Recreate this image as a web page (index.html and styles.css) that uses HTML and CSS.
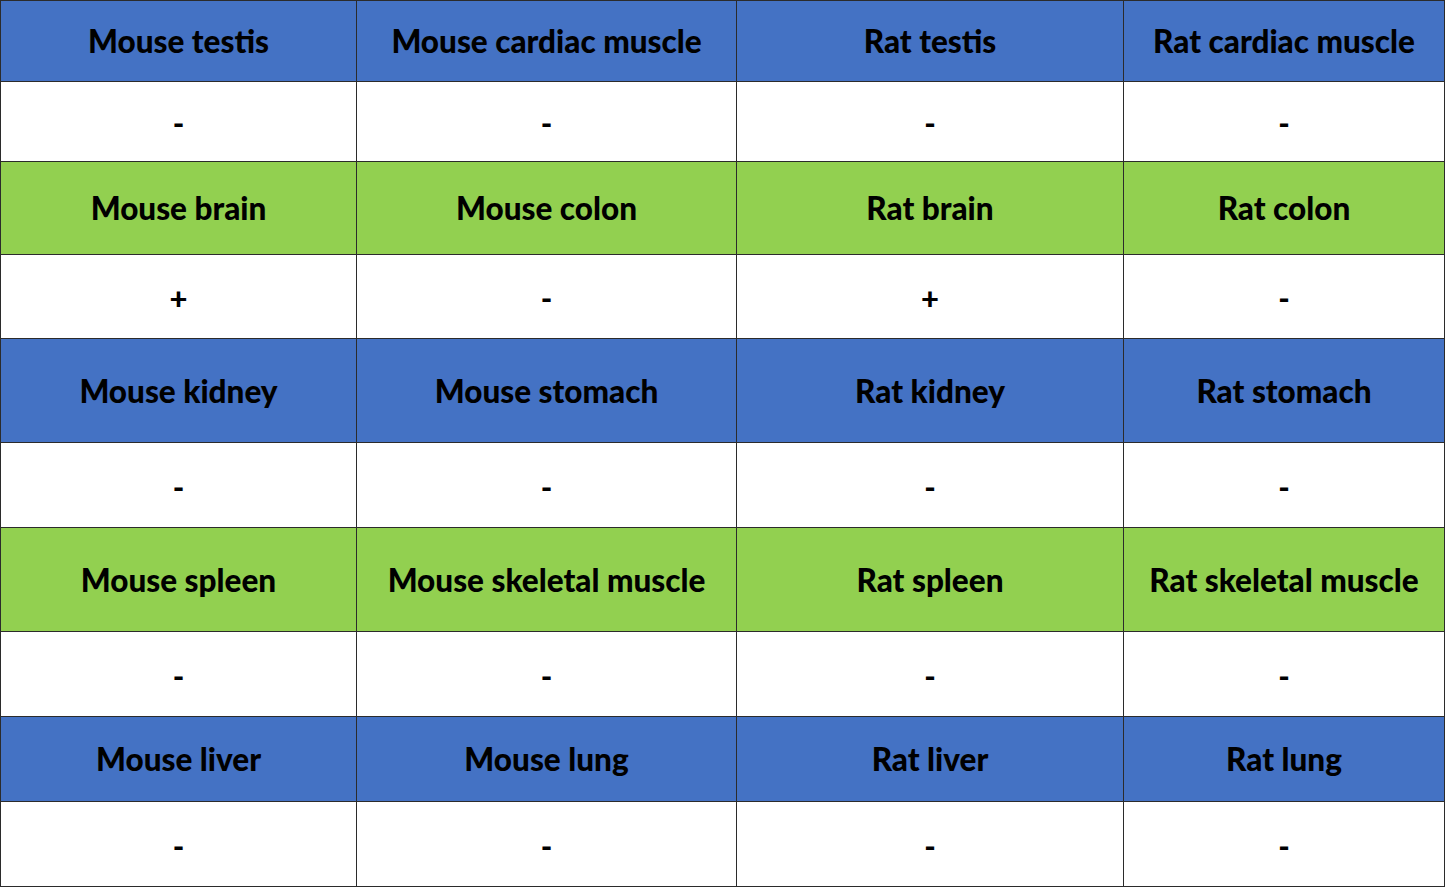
FILE: index.html
```html
<!DOCTYPE html>
<html>
<head>
<meta charset="utf-8">
<link rel="stylesheet" href="styles.css">
</head>
<body>
<div class="grid">
  <div class="cell blue"><span>Mouse testis</span></div>
  <div class="cell blue"><span>Mouse cardiac muscle</span></div>
  <div class="cell blue"><span>Rat testis</span></div>
  <div class="cell blue"><span>Rat cardiac muscle</span></div>

  <div class="cell white"><span class="sign">-</span></div>
  <div class="cell white"><span class="sign">-</span></div>
  <div class="cell white"><span class="sign">-</span></div>
  <div class="cell white"><span class="sign">-</span></div>

  <div class="cell green"><span>Mouse brain</span></div>
  <div class="cell green"><span>Mouse colon</span></div>
  <div class="cell green"><span>Rat brain</span></div>
  <div class="cell green"><span>Rat colon</span></div>

  <div class="cell white"><span class="sign">+</span></div>
  <div class="cell white"><span class="sign">-</span></div>
  <div class="cell white"><span class="sign">+</span></div>
  <div class="cell white"><span class="sign">-</span></div>

  <div class="cell blue"><span>Mouse kidney</span></div>
  <div class="cell blue"><span>Mouse stomach</span></div>
  <div class="cell blue"><span>Rat kidney</span></div>
  <div class="cell blue"><span>Rat stomach</span></div>

  <div class="cell white"><span class="sign">-</span></div>
  <div class="cell white"><span class="sign">-</span></div>
  <div class="cell white"><span class="sign">-</span></div>
  <div class="cell white"><span class="sign">-</span></div>

  <div class="cell green"><span>Mouse spleen</span></div>
  <div class="cell green"><span>Mouse skeletal muscle</span></div>
  <div class="cell green"><span>Rat spleen</span></div>
  <div class="cell green"><span>Rat skeletal muscle</span></div>

  <div class="cell white"><span class="sign">-</span></div>
  <div class="cell white"><span class="sign">-</span></div>
  <div class="cell white"><span class="sign">-</span></div>
  <div class="cell white"><span class="sign">-</span></div>

  <div class="cell blue"><span>Mouse liver</span></div>
  <div class="cell blue"><span>Mouse lung</span></div>
  <div class="cell blue"><span>Rat liver</span></div>
  <div class="cell blue"><span>Rat lung</span></div>

  <div class="cell white"><span class="sign">-</span></div>
  <div class="cell white"><span class="sign">-</span></div>
  <div class="cell white"><span class="sign">-</span></div>
  <div class="cell white"><span class="sign">-</span></div>
</div>
</body>
</html>
```
FILE: styles.css
```css
html, body {
  margin: 0;
  padding: 0;
  background: #ffffff;
}
.grid {
  display: grid;
  width: 1445px;
  box-sizing: border-box;
  grid-template-columns: 355px 379px 386px 320px;
  grid-template-rows: 80px 79px 92px 83px 103px 84px 103px 84px 84px 84px;
  gap: 1px;
  padding: 1px;
  background: #2b2b2b;
  font-family: Lato, "Open Sans", sans-serif;
  font-weight: 900;
  font-size: 31.5px;
  color: #000;
}
.cell {
  display: flex;
  align-items: center;
  justify-content: center;
  white-space: nowrap;
  line-height: 1;
}
.cell span {
  display: inline-block;
  position: relative;
  top: 1px;
}
.blue { background: #4472c4; }
.green { background: #92d050; }
.white { background: #ffffff; }
.cell .sign {
  font-size: 31px;
  top: 2px;
}
```
